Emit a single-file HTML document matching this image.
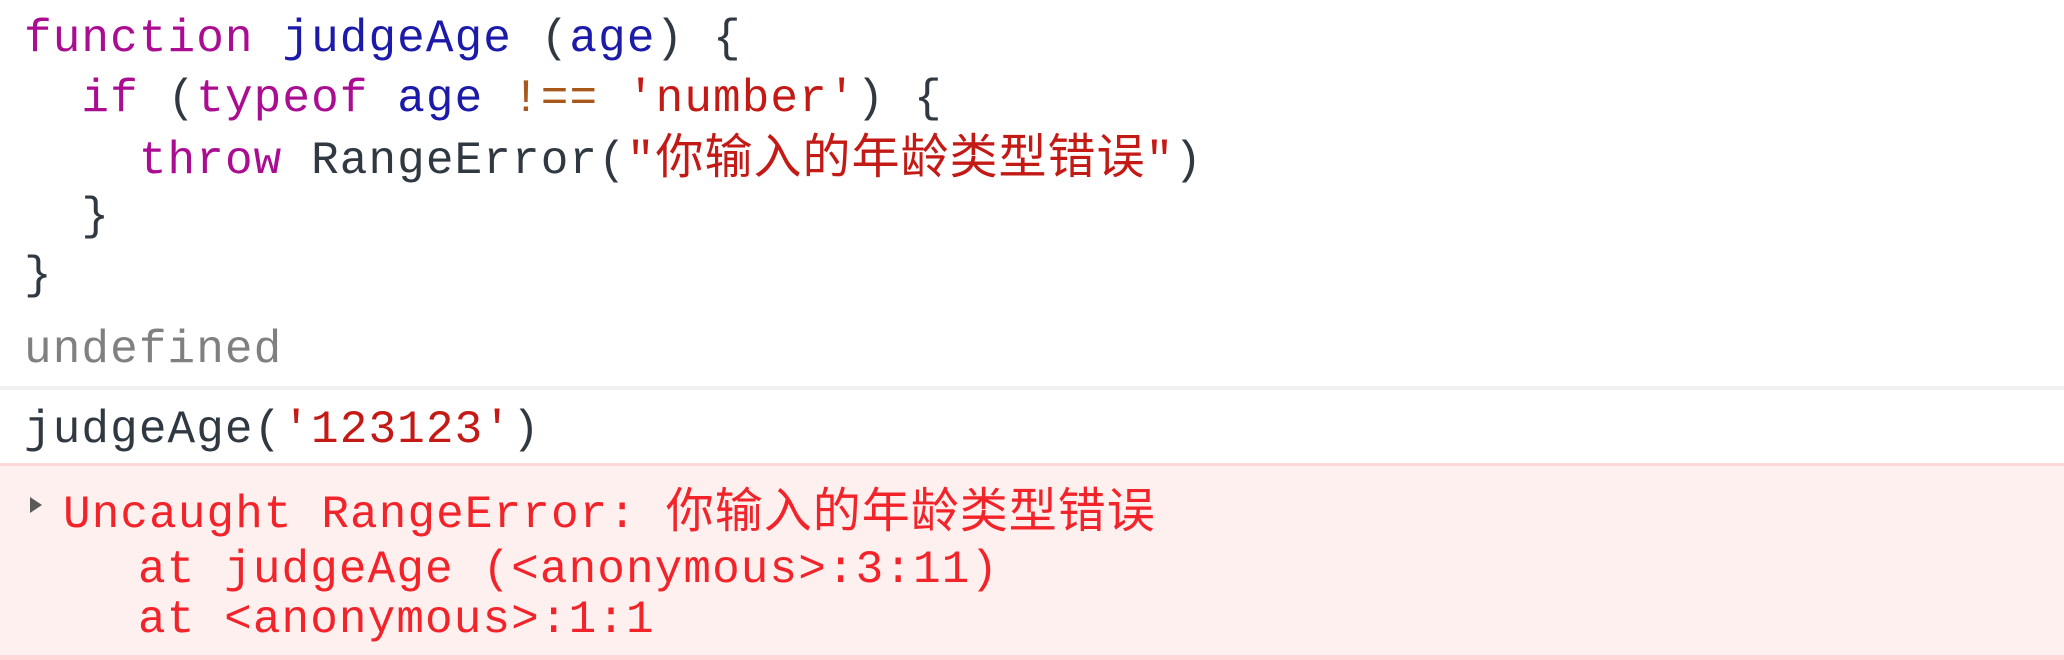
<!DOCTYPE html>
<html><head><meta charset="utf-8"><style>
body{margin:0;width:2064px;height:660px;background:#fff;overflow:hidden;position:relative;
font-family:"Liberation Mono","Noto Sans CJK SC",monospace;font-size:46px;letter-spacing:1.1px}
.l{position:absolute;left:24px;white-space:pre;line-height:60px;color:#303942}
.c{font-family:"Noto Sans CJK SC",sans-serif;font-size:48px;letter-spacing:1px;line-height:0}
.k{color:#aa0d91}.b{color:#1c1aa8}.s{color:#c41a16}.o{color:#a8581a}
.sep{position:absolute;left:0;width:2064px}
.e{color:#f2242a}
</style></head><body>
<div class="l" style="top:9px"><span class="k">function</span> <span class="b">judgeAge</span> (<span class="b">age</span>) {</div>
<div class="l" style="top:69px">  <span class="k">if</span> (<span class="k">typeof</span> <span class="b">age</span> <span class="o">!==</span> <span class="s">'number'</span>) {</div>
<div class="l" style="top:131px">    <span class="k">throw</span> RangeError(<span class="s">"<span class="c">你输入的年龄类型错误</span>"</span>)</div>
<div class="l" style="top:187px">  }</div>
<div class="l" style="top:246px">}</div>
<div class="l" style="top:320px;color:#808080">undefined</div>
<div class="sep" style="top:386px;height:4px;background:#f0f0f0"></div>
<div class="l" style="top:400px">judgeAge(<span class="s">'123123'</span>)</div>
<div class="sep" style="top:463px;height:197px;background:#fff0f0;border-top:3px solid #ffd7d7;box-sizing:border-box"></div>
<div class="sep" style="top:655px;height:5px;background:#ffd7d7"></div>
<div style="position:absolute;left:30px;top:497px;width:0;height:0;border-left:12px solid #5a5a5a;border-top:8px solid transparent;border-bottom:8px solid transparent"></div>
<div class="l e" style="top:485px;left:63px">Uncaught RangeError: <span class="c">你输入的年龄类型错误</span></div>
<div class="l e" style="top:540px;left:138px">at judgeAge (&lt;anonymous&gt;:3:11)</div>
<div class="l e" style="top:590px;left:138px">at &lt;anonymous&gt;:1:1</div>
</body></html>
